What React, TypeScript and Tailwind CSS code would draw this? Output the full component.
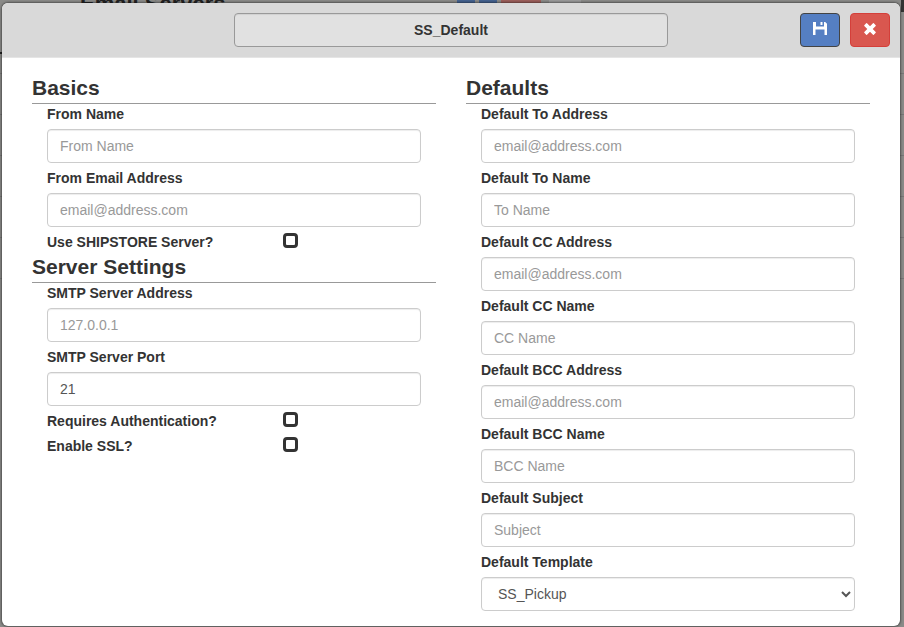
import React from 'react';

const inputClass =
  'block h-[34px] w-full rounded border border-[#ccc] bg-white px-3 text-sm text-[#555] shadow-[inset_0_1px_1px_rgba(0,0,0,0.075)] placeholder:text-[#999]';

type FieldProps = {
  id: string;
  label: string;
  placeholder?: string;
  value?: string;
};

function Field({ id, label, placeholder, value }: FieldProps) {
  return (
    <div className="pb-[5px]">
      <label htmlFor={id} className="block pb-[5px] text-sm font-bold">{label}</label>
      <input id={id} type="text" placeholder={placeholder} defaultValue={value} className={inputClass} />
    </div>
  );
}

function CheckField({ id, label }: { id: string; label: string }) {
  return (
    <div className="grid h-[25px] grid-cols-[63%_1fr]">
      <label htmlFor={id} className="text-sm font-bold">{label}</label>
      <input
        id={id}
        type="checkbox"
        className="mt-px h-[15px] w-[15px] appearance-none rounded-[4px] border-[3px] border-[#333] checked:bg-[#333]"
      />
    </div>
  );
}

function SectionTitle({ children }: { children: React.ReactNode }) {
  return <h2 className="border-b border-[#999] pb-[6px] text-[21px] leading-[19px] font-bold">{children}</h2>;
}

const defaults = [
  { id: 'to-address', label: 'Default To Address', placeholder: 'email@address.com' },
  { id: 'to-name', label: 'Default To Name', placeholder: 'To Name' },
  { id: 'cc-address', label: 'Default CC Address', placeholder: 'email@address.com' },
  { id: 'cc-name', label: 'Default CC Name', placeholder: 'CC Name' },
  { id: 'bcc-address', label: 'Default BCC Address', placeholder: 'email@address.com' },
  { id: 'bcc-name', label: 'Default BCC Name', placeholder: 'BCC Name' },
  { id: 'subject', label: 'Default Subject', placeholder: 'Subject' }
];

// The page that lies dimmed behind the dialog
function Backdrop() {
  return (
    <div className="absolute inset-0 overflow-hidden bg-[#8a8a88]" aria-hidden="true">
      <div className="absolute -top-2 left-20 text-[22px] leading-6 font-bold text-[#222]">Email Servers</div>
      <div className="absolute top-0 left-[457px] flex h-3 gap-1">
        <span className="w-[18px] bg-[#45628f]" />
        <span className="w-[18px] bg-[#45628f]" />
        <span className="w-10 bg-[#9c5f5b]" />
        <span className="ml-1 w-8 bg-[#999]" />
      </div>
      <div className="absolute top-0 right-0 h-3 w-[3px] bg-[#333]" />
      <div className="absolute top-[52px] left-0 h-[2px] w-1/2 bg-[#222]" />
      <div className="absolute inset-x-0 top-[73px]">
        {Array.from({ length: 6 }, (_, row) => (
          <div key={row} className="h-[41px] border-t border-[#777]" />
        ))}
      </div>
    </div>
  );
}

export default function App() {
  return (
    <div className="relative min-h-screen pt-[3px] pr-1 pb-px pl-[2px] font-['Liberation_Sans',Arial,sans-serif] text-[#333]">
      <Backdrop />
      <main role="dialog" aria-label="Email server" className="relative min-h-[623px] overflow-hidden rounded-md bg-white shadow-[0_0_2px_1px_rgba(0,0,0,0.4)]">
        <header className="grid grid-cols-[1fr_434px_1fr] gap-4 border-b border-[#e5e5e5] bg-[#d9d9d9] px-[10px] py-[10px]">
          <input
            type="text"
            aria-label="Server name"
            defaultValue="SS_Default"
            className="col-start-2 h-[34px] rounded border border-[#999] bg-[#e1e1e1] px-3 text-center text-sm font-bold shadow-[inset_0_1px_1px_rgba(0,0,0,0.075)]"
          />
          <div className="flex justify-end gap-[10px]">
            <button type="button" aria-label="Save" className="flex h-[34px] w-10 items-center justify-center rounded border border-[#444] bg-[#557fc3] pb-[2px] text-white">
              <svg viewBox="0 0 14 14" className="h-[14px] w-[14px]" fill="currentColor">
                <path d="M0 0h3v4.500h8V0h1.200L14 1.800V13h-2.500V7.500h-9V13H0z M7.500 0h2v3h-2z" />
              </svg>
            </button>
            <button type="button" aria-label="Close" className="flex h-[34px] w-10 items-center justify-center rounded border border-[#d43f3a] bg-[#d9574f] pb-[2px] text-white">
              <svg viewBox="0 0 14 14" className="h-[14px] w-[14px]" fill="currentColor">
                <path d="M4 1.300 7 4.300l3-3q.4-.4.8 0l1.900 1.900q.4.4 0 .8l-3 3 3 3q.4.4 0 .8l-1.900 1.900q-.4.4-.8 0l-3-3-3 3q-.4.4-.8 0l-1.900-1.900q-.4-.4 0-.8l3-3-3-3q-.4-.4 0-.8l1.900-1.900q.4-.4.8 0z" />
              </svg>
            </button>
          </div>
        </header>

        <form className="grid grid-cols-2 gap-[30px] px-[30px] pt-5 pb-[10px]">
          <div>
            <SectionTitle>Basics</SectionTitle>
            <div className="px-[15px]">
              <Field id="from-name" label="From Name" placeholder="From Name" />
              <Field id="from-email" label="From Email Address" placeholder="email@address.com" />
              <CheckField id="shipstore" label="Use SHIPSTORE Server?" />
            </div>
            <SectionTitle>Server Settings</SectionTitle>
            <div className="px-[15px]">
              <Field id="smtp-address" label="SMTP Server Address" placeholder="127.0.0.1" />
              <Field id="smtp-port" label="SMTP Server Port" value="21" />
              <CheckField id="auth" label="Requires Authentication?" />
              <CheckField id="ssl" label="Enable SSL?" />
            </div>
          </div>

          <div>
            <SectionTitle>Defaults</SectionTitle>
            <div className="px-[15px]">
              {defaults.map((field) => (
                <Field key={field.id} {...field} />
              ))}
              <label htmlFor="template" className="block pb-[5px] text-sm font-bold">Default Template</label>
              <select id="template" className={inputClass} defaultValue="SS_Pickup">
                <option>SS_Pickup</option>
              </select>
            </div>
          </div>
        </form>
      </main>
    </div>
  );
}
